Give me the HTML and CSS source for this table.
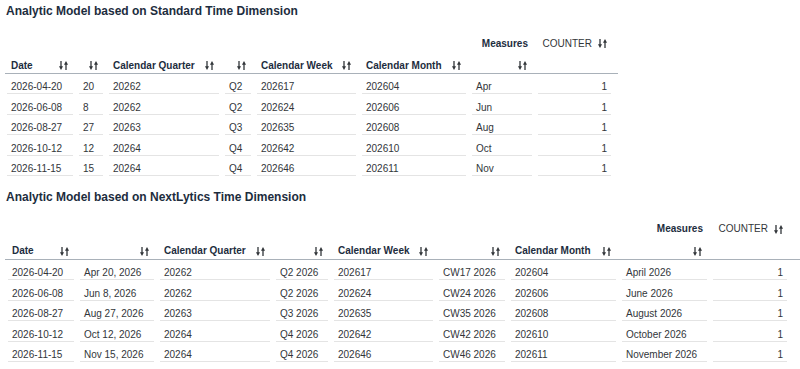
FILE: index.html
```html
<!DOCTYPE html>
<html lang="en">
<head>
    <meta charset="UTF-8">
    <title>Analytic Models - Time Dimension</title>
    <link rel="stylesheet" href="styles.css">
</head>
<body>
    <section class="model">
        <h2 class="model-title">Analytic Model based on Standard Time Dimension</h2>
        <div class="pivot pivot-std">
            <div class="mcell mcell-label">Measures</div>
            <div class="mcell mcell-measure">COUNTER <svg class="sort" viewBox="0 0 9 9"><path d="M2 0v6M7 9V3"/><polygon points="0,5.2 4,5.2 2,9"/><polygon points="5,3.8 9,3.8 7,0"/></svg></div>

            <div class="hcell">Date <svg class="sort" viewBox="0 0 9 9"><path d="M2 0v6M7 9V3"/><polygon points="0,5.2 4,5.2 2,9"/><polygon points="5,3.8 9,3.8 7,0"/></svg></div>
            <div class="hcell"><svg class="sort" viewBox="0 0 9 9"><path d="M2 0v6M7 9V3"/><polygon points="0,5.2 4,5.2 2,9"/><polygon points="5,3.8 9,3.8 7,0"/></svg></div>
            <div class="hcell">Calendar Quarter <svg class="sort" viewBox="0 0 9 9"><path d="M2 0v6M7 9V3"/><polygon points="0,5.2 4,5.2 2,9"/><polygon points="5,3.8 9,3.8 7,0"/></svg></div>
            <div class="hcell"><svg class="sort" viewBox="0 0 9 9"><path d="M2 0v6M7 9V3"/><polygon points="0,5.2 4,5.2 2,9"/><polygon points="5,3.8 9,3.8 7,0"/></svg></div>
            <div class="hcell">Calendar Week <svg class="sort" viewBox="0 0 9 9"><path d="M2 0v6M7 9V3"/><polygon points="0,5.2 4,5.2 2,9"/><polygon points="5,3.8 9,3.8 7,0"/></svg></div>
            <div class="hcell">Calendar Month <svg class="sort" viewBox="0 0 9 9"><path d="M2 0v6M7 9V3"/><polygon points="0,5.2 4,5.2 2,9"/><polygon points="5,3.8 9,3.8 7,0"/></svg></div>
            <div class="hcell"><svg class="sort" viewBox="0 0 9 9"><path d="M2 0v6M7 9V3"/><polygon points="0,5.2 4,5.2 2,9"/><polygon points="5,3.8 9,3.8 7,0"/></svg></div>
            <div class="hcell"></div>
            <div class="divider"></div>

            <div class="cell">2026-04-20</div><div class="cell">20</div><div class="cell">20262</div><div class="cell">Q2</div><div class="cell">202617</div><div class="cell">202604</div><div class="cell">Apr</div><div class="cell num">1</div>
            <div class="cell">2026-06-08</div><div class="cell">8</div><div class="cell">20262</div><div class="cell">Q2</div><div class="cell">202624</div><div class="cell">202606</div><div class="cell">Jun</div><div class="cell num">1</div>
            <div class="cell">2026-08-27</div><div class="cell">27</div><div class="cell">20263</div><div class="cell">Q3</div><div class="cell">202635</div><div class="cell">202608</div><div class="cell">Aug</div><div class="cell num">1</div>
            <div class="cell">2026-10-12</div><div class="cell">12</div><div class="cell">20264</div><div class="cell">Q4</div><div class="cell">202642</div><div class="cell">202610</div><div class="cell">Oct</div><div class="cell num">1</div>
            <div class="cell">2026-11-15</div><div class="cell">15</div><div class="cell">20264</div><div class="cell">Q4</div><div class="cell">202646</div><div class="cell">202611</div><div class="cell">Nov</div><div class="cell num">1</div>
        </div>
    </section>

    <section class="model">
        <h2 class="model-title">Analytic Model based on NextLytics Time Dimension</h2>
        <div class="pivot pivot-nl">
            <div class="mcell mcell-label">Measures</div>
            <div class="mcell mcell-measure">COUNTER <svg class="sort" viewBox="0 0 9 9"><path d="M2 0v6M7 9V3"/><polygon points="0,5.2 4,5.2 2,9"/><polygon points="5,3.8 9,3.8 7,0"/></svg></div>

            <div class="hcell">Date <svg class="sort" viewBox="0 0 9 9"><path d="M2 0v6M7 9V3"/><polygon points="0,5.2 4,5.2 2,9"/><polygon points="5,3.8 9,3.8 7,0"/></svg></div>
            <div class="hcell"><svg class="sort" viewBox="0 0 9 9"><path d="M2 0v6M7 9V3"/><polygon points="0,5.2 4,5.2 2,9"/><polygon points="5,3.8 9,3.8 7,0"/></svg></div>
            <div class="hcell">Calendar Quarter <svg class="sort" viewBox="0 0 9 9"><path d="M2 0v6M7 9V3"/><polygon points="0,5.2 4,5.2 2,9"/><polygon points="5,3.8 9,3.8 7,0"/></svg></div>
            <div class="hcell"><svg class="sort" viewBox="0 0 9 9"><path d="M2 0v6M7 9V3"/><polygon points="0,5.2 4,5.2 2,9"/><polygon points="5,3.8 9,3.8 7,0"/></svg></div>
            <div class="hcell">Calendar Week <svg class="sort" viewBox="0 0 9 9"><path d="M2 0v6M7 9V3"/><polygon points="0,5.2 4,5.2 2,9"/><polygon points="5,3.8 9,3.8 7,0"/></svg></div>
            <div class="hcell"><svg class="sort" viewBox="0 0 9 9"><path d="M2 0v6M7 9V3"/><polygon points="0,5.2 4,5.2 2,9"/><polygon points="5,3.8 9,3.8 7,0"/></svg></div>
            <div class="hcell">Calendar Month <svg class="sort" viewBox="0 0 9 9"><path d="M2 0v6M7 9V3"/><polygon points="0,5.2 4,5.2 2,9"/><polygon points="5,3.8 9,3.8 7,0"/></svg></div>
            <div class="hcell"><svg class="sort" viewBox="0 0 9 9"><path d="M2 0v6M7 9V3"/><polygon points="0,5.2 4,5.2 2,9"/><polygon points="5,3.8 9,3.8 7,0"/></svg></div>
            <div class="hcell"></div>
            <div class="divider"></div>

            <div class="cell">2026-04-20</div><div class="cell">Apr 20, 2026</div><div class="cell">20262</div><div class="cell">Q2 2026</div><div class="cell">202617</div><div class="cell">CW17 2026</div><div class="cell">202604</div><div class="cell">April 2026</div><div class="cell num">1</div>
            <div class="cell">2026-06-08</div><div class="cell">Jun 8, 2026</div><div class="cell">20262</div><div class="cell">Q2 2026</div><div class="cell">202624</div><div class="cell">CW24 2026</div><div class="cell">202606</div><div class="cell">June 2026</div><div class="cell num">1</div>
            <div class="cell">2026-08-27</div><div class="cell">Aug 27, 2026</div><div class="cell">20263</div><div class="cell">Q3 2026</div><div class="cell">202635</div><div class="cell">CW35 2026</div><div class="cell">202608</div><div class="cell">August 2026</div><div class="cell num">1</div>
            <div class="cell">2026-10-12</div><div class="cell">Oct 12, 2026</div><div class="cell">20264</div><div class="cell">Q4 2026</div><div class="cell">202642</div><div class="cell">CW42 2026</div><div class="cell">202610</div><div class="cell">October 2026</div><div class="cell num">1</div>
            <div class="cell">2026-11-15</div><div class="cell">Nov 15, 2026</div><div class="cell">20264</div><div class="cell">Q4 2026</div><div class="cell">202646</div><div class="cell">CW46 2026</div><div class="cell">202611</div><div class="cell">November 2026</div><div class="cell num">1</div>
        </div>
    </section>
</body>
</html>
```

FILE: styles.css
```css
* {
    margin: 0;
    padding: 0;
    box-sizing: border-box;
}

html, body {
    width: 100%;
    height: 100%;
    overflow: hidden;
}

body {
    background: #fff;
    color: #32363a;
    font-family: 'Liberation Sans', Arial, sans-serif;
    font-size: 10px;
}

.model {
    padding-top: 3px;
}

.model + .model {
    margin-top: 10px;
}

.model-title {
    color: #1d2d3e;
    font-size: 12px;
    font-weight: 700;
    line-height: 16px;
    padding-left: 6px;
    margin-bottom: 13.5px;
}

.pivot {
    display: grid;
    column-gap: 6px;
}

.pivot-std {
    grid-template-columns: 66px 24px 110px 26px 99px 104px 60px 73px;
    margin-left: 7px;
}

.pivot-nl {
    grid-template-columns: 66px 74px 110px 52px 99px 66px 105px 85px 74px;
    margin-left: 8px;
}

.mcell {
    display: flex;
    align-items: center;
    justify-content: flex-end;
    gap: 6px;
    padding: 5px 4px;
    line-height: 12px;
    white-space: nowrap;
}

.mcell-label {
    grid-column: -3 / -2;
    color: #1d2d3e;
    font-weight: 700;
}

.hcell {
    display: flex;
    align-items: center;
    justify-content: space-between;
    padding: 5px 5px 1.5px 4px;
    min-height: 18.5px;
    line-height: 12px;
    color: #1d2d3e;
    font-weight: 700;
    white-space: nowrap;
}

.hcell .sort {
    margin-left: auto;
}

.sort {
    width: 9px;
    height: 9px;
    flex: none;
}

.sort path {
    stroke: #32363a;
    stroke-width: 1.3;
    fill: none;
}

.sort polygon {
    fill: #32363a;
}

.divider {
    grid-column: 1 / -1;
    height: 1px;
    background: #a9b1b9;
}

.pivot-std .divider {
    margin: 0 -7px 0 -2px;
}

.pivot-nl .divider {
    margin: 0 -20px 0 -3px;
}

.cell {
    padding: 7.4px 4px 0;
    line-height: 12px;
    border-bottom: 1px solid #e4e4e4;
    white-space: nowrap;
}

.num {
    text-align: right;
}
```
